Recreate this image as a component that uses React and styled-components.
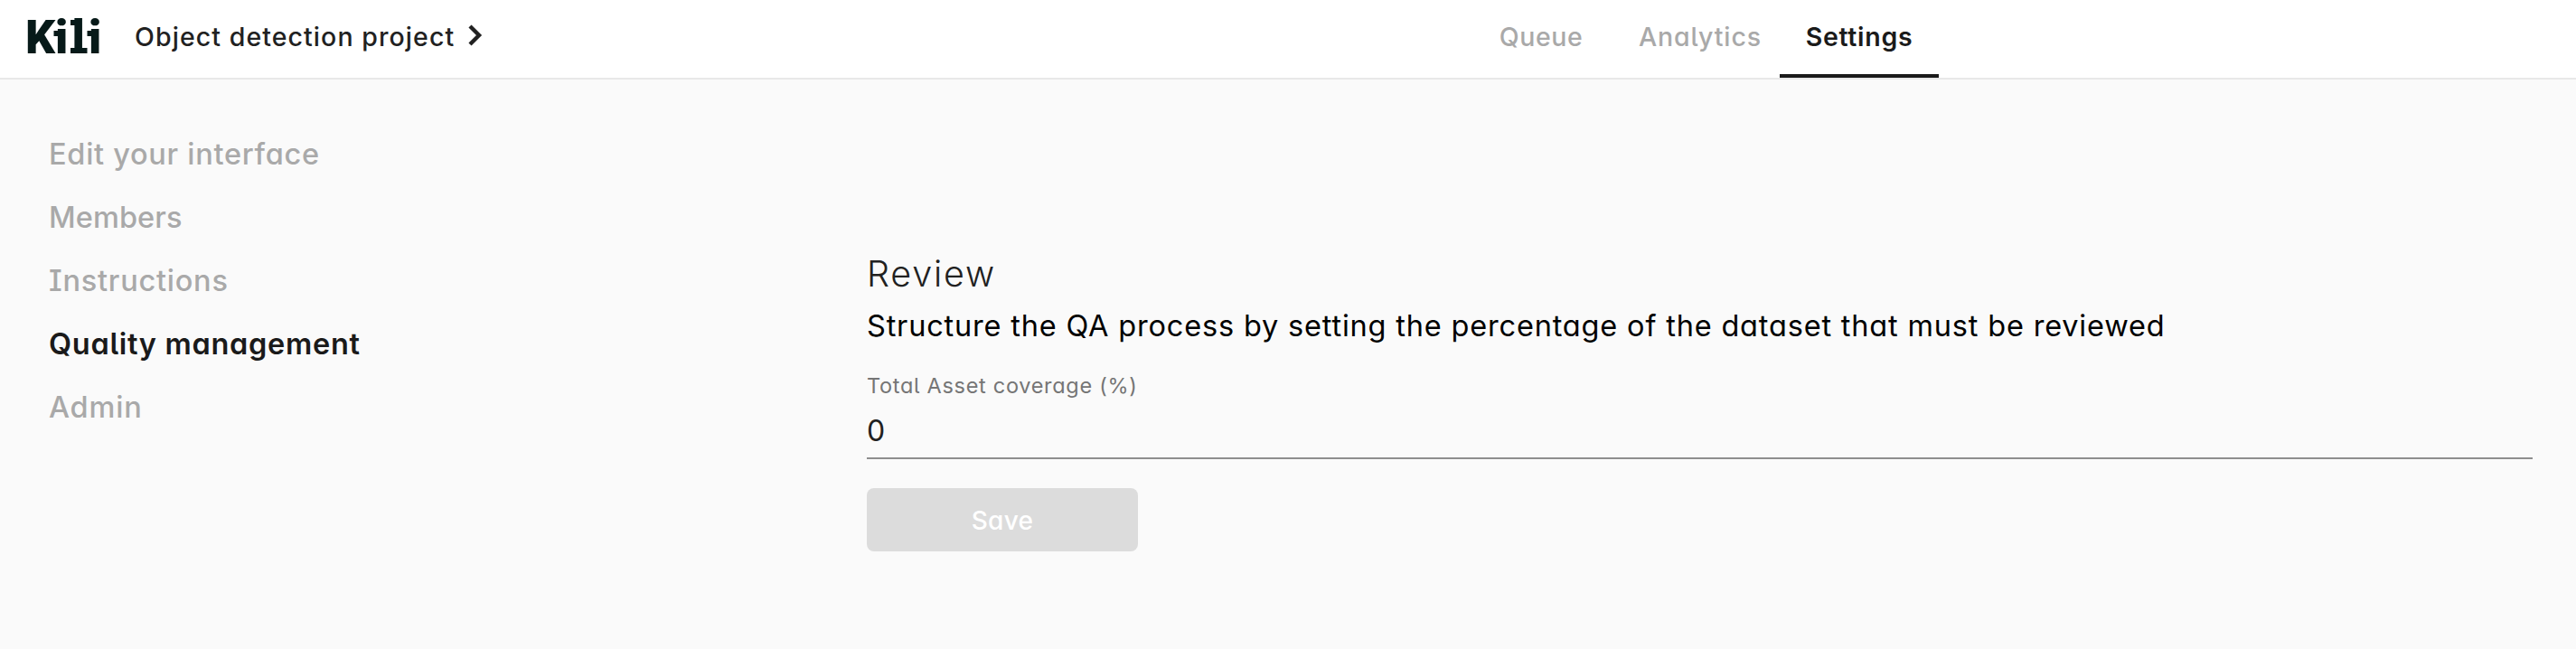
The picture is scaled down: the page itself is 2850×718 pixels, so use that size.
import React from 'react';
import styled, { createGlobalStyle } from 'styled-components';

const GlobalStyle = createGlobalStyle`
  * { box-sizing: border-box; }
  body {
    margin: 0;
    background: #fafafa;
    color: #1a1a1a;
    font-family: Inter, 'Liberation Sans', sans-serif;
    font-feature-settings: 'cv11', 'cv08', 'cv05';
  }
`;

const Page = styled.div`
  min-height: 718px;
  display: flex;
  flex-direction: column;
`;

const Header = styled.header`
  height: 88px;
  display: flex;
  background: #fff;
  border-bottom: 2px solid #e8e8e8;
`;

const Brand = styled.div`
  width: 1617px;
  display: flex;
  align-items: center;
  padding: 0 0 6px 20px;
`;

const LogoMark = styled.svg`
  width: 100px;
  height: 78px;
  margin-right: 29px;
  overflow: visible;
  fill: #071a19;
  font-family: Roboto, sans-serif;
  font-weight: 900;
  font-size: 52px;
`;

const ProjectName = styled.span`
  font-size: 28.5px;
  font-weight: 500;
  letter-spacing: 1.08px;
  color: #212121;
  white-space: nowrap;
`;

const Chevron = styled.svg`
  width: 18px;
  height: 26px;
  margin: 0 0 2px 14px;
  fill: none;
  stroke: #212121;
  stroke-width: 4.4;
`;

const Tabs = styled.nav`
  display: flex;
`;

const Tab = styled.a`
  width: 176px;
  display: flex;
  justify-content: center;
  align-items: center;
  padding-bottom: ${(p) => (p.$active ? 1 : 5)}px;
  border-bottom: ${(p) => (p.$active ? '4px solid #1a1a1a' : 'none')};
  font-size: 28.5px;
  font-weight: ${(p) => (p.$active ? 600 : 500)};
  letter-spacing: ${(p) => p.$tracking}px;
  color: ${(p) => (p.$active ? '#1a1a1a' : '#a9a9a9')};
`;

const Body = styled.div`
  display: flex;
  flex: 1;
`;

const Sidebar = styled.nav`
  width: 959px;
  padding: 48px 0 0 54px;
  display: flex;
  flex-direction: column;
`;

const SidebarLink = styled.a`
  line-height: 70px;
  font-size: 32.5px;
  font-weight: ${(p) => (p.$active ? 600 : 500)};
  letter-spacing: ${(p) => p.$tracking}px;
  color: ${(p) => (p.$active ? '#1a1a1a' : '#a9a9a9')};
`;

const Content = styled.main`
  width: 1843px;
  padding-top: 185px;
`;

const Title = styled.h2`
  margin: 0;
  line-height: 60px;
  font-size: 39.5px;
  font-weight: 300;
  letter-spacing: 1.8px;
  color: #212121;
`;

const Description = styled.p`
  margin: 0 0 17px;
  line-height: 56px;
  font-size: 32.5px;
  letter-spacing: 0.82px;
  color: #000;
  white-space: nowrap;
`;

const Label = styled.label`
  display: block;
  line-height: 42px;
  font-size: 23.5px;
  font-weight: 400;
  letter-spacing: 0.7px;
  color: #757575;
`;

const Value = styled.div`
  height: 60px;
  line-height: 58px;
  font-size: 32px;
  color: #212121;
  border-bottom: 2px solid #8e8e8e;
`;

const SaveButton = styled.button`
  width: 300px;
  height: 70px;
  margin-top: 32px;
  padding: 2px 0 0;
  border: 0;
  border-radius: 8px;
  background: #dcdcdc;
  color: #fff;
  font: inherit;
  font-size: 28px;
  font-weight: 500;
  letter-spacing: 0.3px;
`;

const Logo = () => (
  <LogoMark viewBox="-10 -20 100 78">
    <text x="-2" y="38" textLength="33" lengthAdjust="spacingAndGlyphs">K</text>
    <text x="31" y="38">i</text>
    <text x="49.5" y="38">l</text>
    <text x="68" y="38">i</text>
    <rect x="29.5" y="13" width="6" height="6" />
    <rect x="48" y="1" width="6" height="6" />
    <rect x="48" y="32" width="18.5" height="6" />
    <rect x="66.5" y="13" width="6" height="6" />
  </LogoMark>
);

const tabs = [
  { label: 'Queue', tracking: 0.6 },
  { label: 'Analytics', tracking: 0.9 },
  { label: 'Settings', tracking: 0.7, active: true },
];

const links = [
  { label: 'Edit your interface', tracking: 0.72 },
  { label: 'Members', tracking: 0.1 },
  { label: 'Instructions', tracking: 0.75 },
  { label: 'Quality management', tracking: 0.7, active: true },
  { label: 'Admin', tracking: 0.8 },
];

export default function App() {
  return (
    <Page>
      <GlobalStyle />
      <Header>
        <Brand>
          <Logo />
          <ProjectName>Object detection project</ProjectName>
          <Chevron viewBox="0 0 18 26">
            <path d="M3 3 L13 13 L3 23" />
          </Chevron>
        </Brand>
        <Tabs>
          {tabs.map((t) => (
            <Tab key={t.label} $active={t.active} $tracking={t.tracking}>{t.label}</Tab>
          ))}
        </Tabs>
      </Header>
      <Body>
        <Sidebar>
          {links.map((l) => (
            <SidebarLink key={l.label} $active={l.active} $tracking={l.tracking}>{l.label}</SidebarLink>
          ))}
        </Sidebar>
        <Content>
          <Title>Review</Title>
          <Description>
            Structure the QA process by setting the percentage of the dataset that must be reviewed
          </Description>
          <Label>Total Asset coverage (%)</Label>
          <Value>0</Value>
          <SaveButton>Save</SaveButton>
        </Content>
      </Body>
    </Page>
  );
}
